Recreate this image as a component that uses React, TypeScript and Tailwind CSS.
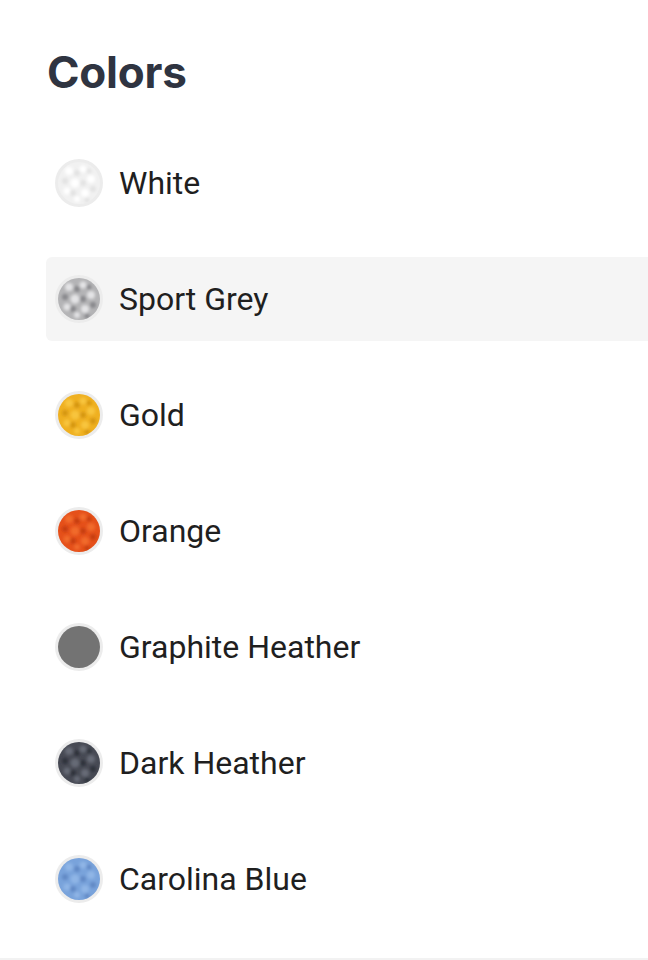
import { useId } from 'react';

type Swatch = {
  name: string;
  base: string;
  light?: string;
  dark?: string;
};

const colors: Swatch[] = [
  { name: 'White', base: '#f1f1f1', light: '#ffffff', dark: '#e2e2e2' },
  { name: 'Sport Grey', base: '#b4b4b6', light: '#e4e4e6', dark: '#86868a' },
  { name: 'Gold', base: '#efb021', light: '#f8c53c', dark: '#d4950e' },
  { name: 'Orange', base: '#e5501a', light: '#f16a2c', dark: '#c53c0c' },
  { name: 'Graphite Heather', base: '#737373' },
  { name: 'Dark Heather', base: '#474a54', light: '#666a76', dark: '#2f323a' },
  { name: 'Carolina Blue', base: '#79a3db', light: '#8fb5e6', dark: '#6188c4' },
];

// knit-ish blobs, placed by hand
const lightSpots = [
  [14, 12, 4],
  [28, 10, 3.5],
  [36, 20, 4],
  [20, 24, 4.5],
  [12, 32, 3.5],
  [30, 34, 4],
  [22, 40, 3],
];
const darkSpots = [
  [22, 14, 3],
  [34, 12, 2.5],
  [10, 22, 3],
  [28, 24, 3],
  [38, 30, 3],
  [18, 34, 3],
  [32, 41, 2.5],
];

function SwatchDot({ c }: { c: Swatch }) {
  const id = useId().replace(/:/g, '');
  return (
    <svg width="48" height="48" viewBox="0 0 48 48" className="shrink-0">
      <defs>
        <clipPath id={`clip-${id}`}>
          <circle cx="24" cy="24" r="21" />
        </clipPath>
        <filter id={`blur-${id}`} x="-20%" y="-20%" width="140%" height="140%">
          <feGaussianBlur stdDeviation="1.6" />
        </filter>
      </defs>
      <circle cx="24" cy="24" r="24" fill="#ececec" />
      <circle cx="24" cy="24" r="21" fill={c.base} />
      {c.light && (
        <g clipPath={`url(#clip-${id})`}>
          <g filter={`url(#blur-${id})`}>
            {lightSpots.map(([x, y, r], i) => (
              <circle key={`l${i}`} cx={x} cy={y} r={r} fill={c.light} />
            ))}
            {darkSpots.map(([x, y, r], i) => (
              <circle key={`d${i}`} cx={x} cy={y} r={r} fill={c.dark} />
            ))}
          </g>
        </g>
      )}
    </svg>
  );
}

export default function App() {
  return (
    <div className="min-h-[960px] bg-white flex flex-col font-['Roboto',sans-serif]">
      <div className="pl-[46px] pt-[46px] flex-1">
        <h2 className="pl-[1px] text-[44px] leading-[52px] font-bold text-[#2f3441] tracking-[-0.005em] font-['Inter',sans-serif]">
          Colors
        </h2>
        <div className="mt-[43px] flex flex-col gap-8">
          {colors.map((c) => (
            <div
              key={c.name}
              className={`flex items-center gap-4 h-[84px] pl-[9px] rounded-l-md ${
                c.name === 'Sport Grey' ? 'bg-[#f5f5f5]' : ''
              }`}
            >
              <SwatchDot c={c} />
              <span className="text-[32px] text-[#1f1f1f]">{c.name}</span>
            </div>
          ))}
        </div>
      </div>
      <div className="h-[2px] bg-[#f2f2f2]" />
    </div>
  );
}
